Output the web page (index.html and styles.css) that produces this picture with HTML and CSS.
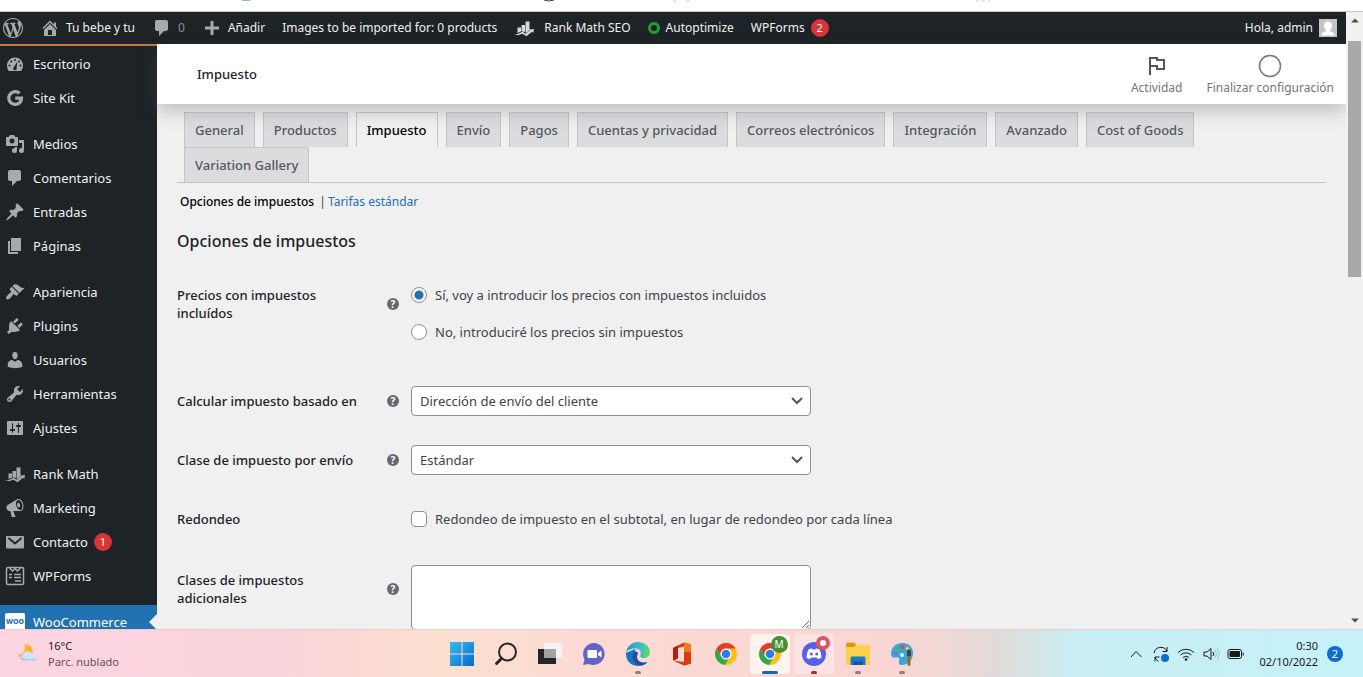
FILE: index.html
```html
<!DOCTYPE html>
<html lang="es">
<head>
    <meta charset="UTF-8">
    <meta name="viewport" content="width=device-width, initial-scale=1.0">
    <title>Impuesto - Tu bebe y tu</title>
    <link rel="stylesheet" href="styles.css">
</head>
<body>

    <!-- Shared icons -->
    <svg class="sprite" aria-hidden="true">
        <symbol id="i-comments" viewBox="0 0 20 20"><path d="M5 2h9c1.1 0 2 .9 2 2v7c0 1.1-.9 2-2 2h-2l-5 5v-5H5c-1.1 0-2-.9-2-2V4c0-1.1.9-2 2-2z"/></symbol>
        <symbol id="i-rank" viewBox="0 0 20 20"><path d="M3.500 9.500h3.500v4l-3.500 1.500zM7.500 7H11v6.500l-1 .500-2.500-.8zM11.500 3.500h4V12l-3 3-1-.8z"/><path d="M0 16.500l3-.3 5.500-2.500 3.500 2 3.700-3.400-1.200-.8 5.500-.5-.7 4-1.300-1.200-5.500 4.500-4-2.600-4.500 1.600z"/></symbol>
        <symbol id="i-chrome" viewBox="0 0 24 24"><circle cx="12" cy="12" r="11" fill="#fbc116"/><path d="M2.500 6.500l4.700 8.200L12 17.500l-1 5.450A11 11 0 0 1 2.500 6.500z" fill="#2da94f"/><path d="M11 23l5.500-9-4.500 3z" fill="#2da94f"/><path d="M2.500 6.500A11 11 0 0 1 21.500 6.500H12A5.500 5.500 0 0 0 7.200 14.700z" fill="#e33b2e"/><circle cx="12" cy="12" r="5.500" fill="#fff"/><circle cx="12" cy="12" r="4.300" fill="#2b7de9"/></symbol>
    </svg>

    <!-- Bottom edge of the browser toolbar -->
    <div class="toolbar-edge">
        <svg width="1000" height="5" aria-hidden="true"><path d="M242 0h8" stroke="#9db8c0" stroke-width="2"/><path d="M544 0q5 2 10 0" stroke="#3c4043" fill="none"/><path d="M673 0l3 2M689 0l-3 2M976 1h3M982 1h3M988 1h2" stroke="#c4c7ca" fill="none"/></svg>
    </div>

    <div class="viewport">
        <div class="site">

            <!-- Admin bar -->
            <header class="adminbar">
                <a href="#" aria-label="WordPress"><svg class="icon" viewBox="0 0 20 20"><path d="M20 10c0-5.510-4.490-10-10-10C4.480 0 0 4.490 0 10c0 5.520 4.480 10 10 10 5.510 0 10-4.480 10-10zM7.780 15.370L4.370 6.220c.55-.02 1.170-.08 1.170-.08.5-.06.44-1.130-.06-1.110 0 0-1.450.11-2.370.11-.18 0-.37 0-.58-.01C4.120 2.690 6.870 1.110 10 1.110c2.330 0 4.450.87 6.050 2.340-.68-.11-1.650.39-1.650 1.580 0 .74.45 1.360.9 2.100.35.61.55 1.360.55 2.460 0 1.490-1.400 5-1.400 5l-3.030-8.370c.54-.02.82-.17.82-.17.5-.05.44-1.250-.06-1.220 0 0-1.440.12-2.380.12-.87 0-2.330-.12-2.330-.12-.5-.03-.56 1.200-.06 1.220l.92.08 1.260 3.410zM17.410 10c.24-.64.74-1.870.43-4.250.7 1.290 1.050 2.710 1.050 4.250 0 3.290-1.730 6.240-4.400 7.780.97-2.590 1.940-5.200 2.920-7.780zM6.100 18.090C3.120 16.650 1.110 13.530 1.110 10c0-1.300.23-2.480.72-3.590C3.250 10.300 4.670 14.200 6.100 18.090zm4.030-6.630l2.580 6.980c-.86.29-1.760.45-2.710.45-.79 0-1.570-.11-2.290-.33.81-2.380 1.620-4.740 2.420-7.100z"/></svg></a>
                <a href="#"><svg class="icon" viewBox="0 0 20 20"><path fill-rule="evenodd" d="M16 8.500l1.530 1.530-1.060 1.060L10 4.600l-6.470 6.490-1.060-1.060L10 2.500l4 4v-2h2v4zm-6-2.460l6 5.990V18H4v-5.970zM12 17v-5H8v5h4z"/></svg>Tu bebe y tu</a>
                <a href="#" class="muted"><svg class="icon"><use href="#i-comments"/></svg>0</a>
                <a href="#"><svg class="icon" viewBox="0 0 20 20"><path d="M17 8.500v3h-5.500V17h-3v-5.500H3v-3h5.500V3h3v5.500z"/></svg>Añadir</a>
                <a href="#">Images to be imported for: 0 products</a>
                <a href="#" class="rank"><svg class="icon"><use href="#i-rank"/></svg>Rank Math SEO</a>
                <a href="#"><span class="ring"></span>Autoptimize</a>
                <a href="#">WPForms <span class="badge">2</span></a>
                <a href="#" class="account">Hola, admin
                    <svg class="avatar" viewBox="0 0 18 18"><path fill="#c4c4c4" d="M0 0h18v18H0z"/><path fill="#fff" d="M9 2.500a4 4 0 0 1 4 4.200c0 2-1 3.800-2 4.300v1.200c2 .6 4.500 1.200 4.500 4.300h-13c0-3.100 2.500-3.700 4.500-4.300V11c-1-.5-2-2.300-2-4.300a4 4 0 0 1 4-4.200z"/></svg>
                </a>
            </header>

            <div class="columns">

                <!-- Side menu -->
                <nav class="sidebar">
                    <ul>
                        <li><a href="#"><svg class="icon" viewBox="0 0 20 20"><path d="M3.760 17h12.480A7.950 7.950 0 0 0 18 11.500C18 7 14.400 3.500 10 3.500S2 7 2 11.500c0 2.100.66 4.140 1.760 5.500z"/><g fill="#1d2327"><circle cx="10" cy="6" r="1"/><circle cx="6.200" cy="7.600" r="1"/><circle cx="14" cy="7.600" r="1"/><circle cx="4.500" cy="11.500" r="1"/><circle cx="15.500" cy="11.500" r="1"/><path d="M12.400 7.500l-.8 6.200a1.800 1.800 0 1 1-2.500-.9z"/></g></svg>Escritorio</a></li>
                        <li><a href="#"><svg class="icon" viewBox="0 0 20 20"><path d="M10.200 8.500h7.800c.8 5.600-2.600 9.500-7.800 9.500A8 8 0 1 1 15.700 4.200l-2.400 2.300a4.700 4.700 0 1 0-3.100 8.200c2 0 3.600-1 4.200-2.900h-4.200z"/></svg>Site Kit</a></li>
                    </ul>
                    <ul>
                        <li><a href="#"><svg class="icon" viewBox="0 0 20 20"><path fill-rule="evenodd" d="M13 11V4c0-.55-.45-1-1-1h-1.670L9 1H5L3.670 3H2c-.55 0-1 .45-1 1v7c0 .55.45 1 1 1h10c.55 0 1-.45 1-1zM7 4.500a2.500 2.500 0 1 1 0 5 2.500 2.500 0 0 1 0-5zM14 6h5v10.500a2.500 2.500 0 1 1-2-2.450V9h-3V6zm-4 8.050V13h2v3.500a2.500 2.500 0 1 1-2-2.450z"/></svg>Medios</a></li>
                        <li><a href="#"><svg class="icon"><use href="#i-comments"/></svg>Comentarios</a></li>
                        <li><a href="#"><svg class="icon" viewBox="0 0 20 20"><path d="M10.440 3.020l1.820-1.820 6.360 6.350-1.830 1.820c-1.050-.68-2.480-.57-3.410.36l-.75.75c-.92.93-1.040 2.350-.35 3.410l-1.830 1.820-2.410-2.410-2.800 2.790c-.42.42-3.380 2.710-3.800 2.290s1.860-3.390 2.280-3.810l2.790-2.790L4.100 9.360l1.830-1.820c1.050.69 2.480.57 3.400-.36l.75-.75c.93-.92 1.050-2.350.36-3.410z"/></svg>Entradas</a></li>
                        <li><a href="#"><svg class="icon" viewBox="0 0 20 20"><path d="M6 15V2h10v13H6zm-1 1h8v2H3V5h2v11z"/></svg>Páginas</a></li>
                    </ul>
                    <ul>
                        <li><a href="#"><svg class="icon" viewBox="0 0 20 20"><path d="M14.480 11.060L7.410 3.990l1.500-1.500c.5-.56 2.300-.47 3.510.32 1.210.8 1.430 1.280 2.910 2.100 1.180.64 2.450 1.260 4.450.85zm-.71.71L6.700 4.700 4.930 6.470c-.39.39-.39 1.020 0 1.410l1.060 1.060c.39.39.39 1.030 0 1.420-.6.6-1.430 1.110-2.210 1.690-.35.26-.7.53-1.010.84C1.430 14.230.4 16.080 1.400 17.070c.99 1 2.840-.03 4.180-1.360.31-.31.58-.66.85-1.020.57-.78 1.080-1.610 1.690-2.210.39-.39 1.020-.39 1.410 0l1.060 1.060c.39.39 1.020.39 1.410 0z"/></svg>Apariencia</a></li>
                        <li><a href="#"><svg class="icon" viewBox="0 0 20 20"><path d="M13.110 4.360L9.870 7.600 8 5.730l3.240-3.240c.35-.34 1.050-.2 1.560.32.52.51.66 1.210.31 1.550zm-8 1.770l.91-1.120 9.010 9.010-1.190.84c-.71.71-2.630 1.160-3.820 1.160H6.140L4.900 17.260c-.59.59-1.540.59-2.120 0-.59-.58-.59-1.530 0-2.120l1.240-1.240v-3.880c0-1.130.4-3.190 1.090-3.890zm7.260 3.970l3.240-3.240c.34-.35 1.040-.21 1.550.31.52.51.66 1.210.31 1.550l-3.240 3.250z"/></svg>Plugins</a></li>
                        <li><a href="#"><svg class="icon" viewBox="0 0 20 20"><path d="M10 9.250c-2.270 0-2.730-3.440-2.730-3.440C7 4.020 7.820 2 9.970 2c2.160 0 2.980 2.020 2.710 3.810 0 0-.41 3.440-2.680 3.440zm0 2.570L12.720 10c2.390 0 4.520 2.330 4.520 4.530v2.490s-3.650 1.130-7.240 1.130c-3.650 0-7.240-1.130-7.240-1.130v-2.490c0-2.250 1.940-4.480 4.470-4.480z"/></svg>Usuarios</a></li>
                        <li><a href="#"><svg class="icon" viewBox="0 0 20 20"><path fill-rule="evenodd" d="M16.680 9.770c-1.340 1.340-3.300 1.670-4.950.99l-5.410 6.520c-.99.99-2.590.99-3.580 0s-.99-2.590 0-3.570l6.520-5.420c-.68-1.650-.35-3.610.99-4.950 1.280-1.280 3.120-1.620 4.720-1.060l-2.890 2.890 2.820 2.820 2.860-2.870c.53 1.580.18 3.390-1.080 4.650zM3.810 16.210c.4.39 1.040.39 1.430 0 .4-.4.4-1.040 0-1.430-.39-.4-1.030-.4-1.430 0-.39.39-.39 1.030 0 1.430z"/></svg>Herramientas</a></li>
                        <li><a href="#"><svg class="icon" viewBox="0 0 20 20"><path fill-rule="evenodd" d="M18 16V4c0-.55-.45-1-1-1H3c-.55 0-1 .45-1 1v12c0 .55.45 1 1 1h14c.55 0 1-.45 1-1zM8 11h1c.55 0 1 .45 1 1s-.45 1-1 1H8v1.500c0 .28-.22.5-.5.5s-.5-.22-.5-.5V13H6c-.55 0-1-.45-1-1s.45-1 1-1h1V5.500c0-.28.22-.5.5-.5s.5.22.5.5V11zm5-2h-1c-.55 0-1-.45-1-1s.45-1 1-1h1V5.500c0-.28.22-.5.5-.5s.5.22.5.5V7h1c.55 0 1 .45 1 1s-.45 1-1 1h-1v5.500c0 .28-.22.5-.5.5s-.5-.22-.5-.5V9z"/></svg>Ajustes</a></li>
                    </ul>
                    <ul>
                        <li><a href="#"><svg class="icon"><use href="#i-rank"/></svg>Rank Math</a></li>
                        <li><a href="#"><svg class="icon" viewBox="0 0 20 20"><path fill-rule="evenodd" d="M18.150 5.940c.46 1.620.38 3.220-.02 4.480-.42 1.280-1.260 2.180-2.300 2.480-.3.080-.6.100-1 .100h-6.600l2.220 5.500c.02.14-.06.26-.14.34-.08.1-.24.16-.34.16H6.950c-.1 0-.26-.06-.34-.16-.08-.08-.16-.2-.14-.34l-1-5.500H4.250c-.5.060-1.080-.2-1.560-.64-.46-.44-.88-1.080-1.060-1.880-.24-.8-.2-1.560-.02-2.200.18-.62.58-1.080 1.060-1.300l9.020-5.420c.3-.2.500-.35 1-.46 1.040-.3 2.240.1 3.220.98s1.820 2.240 2.240 3.860zm-2.600 5.980c.4-.1.740-.34 1.040-.7.580-.7.860-1.760.860-3.040 0-.64-.1-1.300-.28-1.980-.34-1.360-1.020-2.500-1.780-3.240s-1.680-1.100-2.460-.88c-.82.22-1.400.96-1.700 2-.32 1.040-.28 2.360.06 3.720.38 1.360 1 2.500 1.800 3.240.78.740 1.620 1.100 2.460.88zm-2.520-7.080c.22-.04.42-.02.62.04.38.16.76.48 1.020 1s.42 1.200.42 1.780c0 .3-.04.56-.12.8-.18.48-.44.84-.86.94-.34.1-.8-.06-1.140-.4s-.64-.86-.78-1.500c-.18-.62-.12-1.240.02-1.720s.48-.84.82-.94z"/></svg>Marketing</a></li>
                        <li><a href="#"><svg class="icon" viewBox="0 0 20 20"><rect x="1" y="4" width="18" height="12.500" rx="1"/><path d="M3.500 6l6.500 5.500L16.500 6" fill="none" stroke="#1d2327" stroke-width="1.800"/></svg>Contacto <span class="badge">1</span></a></li>
                        <li><a href="#"><svg class="icon outline" viewBox="0 0 20 20"><rect x="1.500" y="1.500" width="17" height="17" rx="1.500"/><path d="M4.500 2l3 3L10 2.500 12.500 5l3-3M4 8.500h3M9 8.500h7M4 11.500h3M9 11.500h7M10 15h6"/></svg>WPForms</a></li>
                    </ul>
                    <ul>
                        <li><a href="#" class="current"><span class="woo">Woo</span>WooCommerce</a></li>
                    </ul>
                </nav>

                <main class="content">
                    <div class="page-head">
                        <h1>Impuesto</h1>
                        <div class="activity">
                            <button type="button"><svg viewBox="0 0 24 24"><path d="M5 21V4h7v2h7v9h-7v-3H5" fill="none" stroke="#50575e" stroke-width="2"/></svg>Actividad</button>
                            <button type="button"><svg viewBox="0 0 24 24"><circle cx="12" cy="12" r="10.500" fill="none" stroke="#757575" stroke-width="1.500"/></svg>Finalizar configuración</button>
                        </div>
                    </div>

                    <div class="wrap">
                        <nav class="tabs">
                            <a href="#">General</a>
                            <a href="#">Productos</a>
                            <a href="#" class="active">Impuesto</a>
                            <a href="#">Envío</a>
                            <a href="#">Pagos</a>
                            <a href="#">Cuentas y privacidad</a>
                            <a href="#">Correos electrónicos</a>
                            <a href="#">Integración</a>
                            <a href="#">Avanzado</a>
                            <a href="#">Cost of Goods</a>
                            <a href="#">Variation Gallery</a>
                        </nav>

                        <div class="subnav">
                            <a href="#" class="active">Opciones de impuestos</a> <span>|</span><a href="#">Tarifas estándar</a>
                        </div>

                        <h2>Opciones de impuestos</h2>

                        <form>
                            <div class="row">
                                <span class="name" id="prices-label">Precios con impuestos incluídos</span>
                                <span class="help">?</span>
                                <div class="field radios" role="radiogroup" aria-labelledby="prices-label">
                                    <label><input type="radio" name="prices" checked>Sí, voy a introducir los precios con impuestos incluidos</label>
                                    <label><input type="radio" name="prices">No, introduciré los precios sin impuestos</label>
                                </div>
                            </div>
                            <div class="row">
                                <label class="name" for="based-on">Calcular impuesto basado en</label>
                                <span class="help">?</span>
                                <select id="based-on"><option>Dirección de envío del cliente</option></select>
                            </div>
                            <div class="row">
                                <label class="name" for="shipping-class">Clase de impuesto por envío</label>
                                <span class="help">?</span>
                                <select id="shipping-class"><option>Estándar</option></select>
                            </div>
                            <div class="row">
                                <span class="name">Redondeo</span>
                                <span></span>
                                <div class="field">
                                    <label><input type="checkbox">Redondeo de impuesto en el subtotal, en lugar de redondeo por cada línea</label>
                                </div>
                            </div>
                            <div class="row">
                                <label class="name" for="classes">Clases de impuestos adicionales</label>
                                <span class="help">?</span>
                                <textarea id="classes"></textarea>
                            </div>
                        </form>
                    </div>
                </main>
            </div>
        </div>

        <div class="scrollbar">
            <svg viewBox="0 0 8 4"><path d="M0 4l4-4 4 4z"/></svg>
            <div class="thumb"></div>
            <svg viewBox="0 0 8 4"><path d="M0 0l4 4 4-4z"/></svg>
        </div>
    </div>

    <!-- Windows taskbar -->
    <footer class="taskbar">
        <div class="weather">
            <svg viewBox="0 0 24 24"><path d="M9 2a8 8 0 1 1-7 11c4 1 9-3 7-11z" fill="#f7b52c"/><path d="M7 20a4 4 0 0 1 0-7 6 6 0 0 1 10.500-.5A4 4 0 0 1 19 20z" fill="#d3e3f5"/><path d="M5 19h15a4 4 0 0 0 2-2c-6 2-13 1-17-1z" fill="#a9c5ea"/></svg>
            <div>16°C<br><span>Parc. nublado</span></div>
        </div>

        <div class="apps">
            <button type="button" aria-label="Inicio"><svg viewBox="0 0 24 24"><defs><linearGradient id="win" x1="0" y1="0" x2="1" y2="1"><stop offset="0" stop-color="#38bdf2"/><stop offset="1" stop-color="#0669c9"/></linearGradient></defs><path fill="url(#win)" d="M0 0h11.500v11.500H0zM12.500 0H24v11.500H12.500zM0 12.500h11.500V24H0zM12.500 12.500H24V24H12.500z"/></svg></button>
            <button type="button" aria-label="Buscar"><svg viewBox="0 0 24 24" fill="none" stroke="#2b2727"><circle cx="13.500" cy="10" r="8.500" stroke-width="2"/><path d="M7.500 16.500l-5 5" stroke-width="3" stroke-linecap="round"/></svg></button>
            <button type="button" aria-label="Vista de tareas"><svg viewBox="0 0 24 24"><path fill="#262626" d="M0 7h18v15H0z"/><path fill="#f3f3f3" d="M6 1h18v15H6z"/><path fill="#a3a3a3" d="M6 7h12v9H6z"/></svg></button>
            <button type="button" aria-label="Chat"><svg viewBox="0 0 24 24"><path fill="#6264c8" d="M12 1a11 11 0 1 1-5 21l-6 1 1.500-5.500A11 11 0 0 1 12 1z"/><rect x="5.500" y="8" width="9.500" height="8" rx="1" fill="#fff"/><path d="M16 11l3.500-2.500v7L16 13z" fill="#fff"/></svg></button>
            <button type="button" aria-label="Edge" class="open"><svg viewBox="0 0 24 24"><defs><linearGradient id="edge" x1="0" x2="1"><stop offset="0" stop-color="#2a8fd8"/><stop offset=".6" stop-color="#35bfc9"/><stop offset="1" stop-color="#6bd957"/></linearGradient></defs><path fill="#1673c6" d="M0 11c0 8 5 13 12 13 4 0 7-1 9.500-4-6 2-11 0-11-5L9 7z"/><path fill="url(#edge)" d="M0 11C1 4 6 0 12 0c7 0 12 4.500 12 10 0 4-3 6-6 6s-5-1.500-3.500-3C16 9 13 6.500 9 6.500S1 8 0 11z"/><path fill="#1b4f9c" d="M9 10c-4 3-3 11 4 13 3 .5 6-.5 8.500-3-5 2-10-.5-10.500-4.500-.2-2 .8-3.500 1-4.500-.5-1-1.500-1.500-3-1z"/></svg></button>
            <button type="button" aria-label="Office"><svg viewBox="0 0 24 24"><path fill="#d83b11" d="M3 6l11-5.500 7 2v19l-7 2L3 18.500l11 1.500V4.500L8 6v10.500L3 18.500z"/><path fill="#f07a1f" d="M14 .5l7 2v8h-7z"/><path fill="#d83b11" d="M14 10h7v11.500l-7 2z"/><path fill="#b3200d" d="M3 6l5-2.500v13l-5 2z"/></svg></button>
            <button type="button" aria-label="Chrome"><svg viewBox="0 0 24 24"><use href="#i-chrome"/></svg></button>
            <button type="button" aria-label="Chrome, perfil M" class="focused"><svg viewBox="0 0 24 24"><use href="#i-chrome"/></svg><span class="profile">M</span></button>
            <button type="button" aria-label="Discord" class="alert"><svg viewBox="0 0 24 24"><circle cx="12" cy="12" r="12" fill="#5560ea"/><path fill="#fff" d="M6.500 7.500Q9 6 10 6.500l.5 1h3l.5-1q1-.5 3.500 1 2 3.500 2 8-2 1.500-3.700 1.500l-1-1.500h-5.600l-1 1.500Q6.500 17 4.500 15.500q0-4.500 2-8z"/><g fill="#5560ea"><circle cx="9.300" cy="12" r="1.500"/><circle cx="14.700" cy="12" r="1.500"/></g></svg><span class="dot"></span></button>
            <button type="button" aria-label="Explorador" class="open"><svg viewBox="0 0 24 24"><path fill="#d99a10" d="M0 2q0-1.500 1.500-1.500H8L10.500 3 8 6H0z"/><path fill="#fbd04a" d="M0 5h8l2-2h14v19q0 1-1 1H1q-1 0-1-1z"/><path fill="#1c76c5" d="M4.500 16q0-1.500 1.500-1.500h12q1.500 0 1.500 1.500v7h-15z"/><path fill="#0f559e" d="M7.500 19.500h9V23h-9z"/></svg></button>
            <button type="button" aria-label="Paint" class="open"><svg viewBox="0 0 24 24"><path fill="#35a6e0" d="M12 1c7 0 11 4 11 10 0 7-5 12-11 12-3 0-3.500-1.500-3-3.500s.5-4-2-4-6 .5-6-3.500C1 6 5 1 12 1z"/><circle cx="12.500" cy="5" r="2" fill="#e8463a"/><circle cx="7.500" cy="7" r="2" fill="#49b54c"/><circle cx="5.500" cy="11.500" r="1.700" fill="#a45cc9"/><circle cx="17.500" cy="6.500" r="1.800" fill="#f4c534"/><circle cx="12" cy="13" r="2" fill="#e6f4fb"/><path fill="#9a6432" d="M17.500 14h3v8q0 2-1.500 2t-1.500-2z"/><path fill="#4c4038" d="M17 8.500q2-2 4 0V14h-4z"/></svg></button>
        </div>

        <div class="tray">
            <svg viewBox="0 0 16 16"><path d="M3 11l5-5.500 5.500 5.500"/></svg>
            <svg viewBox="0 0 16 16"><path d="M1 7a7 7 0 0 1 13-2M14 1v4.500H9.500M5.500 15.500A7 7 0 0 1 2 11M2 15.500V11h4.500"/><circle cx="12" cy="12" r="4" fill="#0b6fcb" stroke="none"/></svg>
            <svg viewBox="0 0 16 16"><path d="M0 6.500a11.500 11.500 0 0 1 16 0M2.500 9a8 8 0 0 1 11 0M5 11.500a4.500 4.500 0 0 1 6 0"/><circle cx="8" cy="13.500" r="1.300" fill="#1b1b1b" stroke="none"/></svg>
            <svg viewBox="0 0 16 16"><path d="M1 6h3l4-3.500v11L4 10H1zM10 6q1.500 2 0 4"/><path d="M12 4q3 4 0 8M14 2.500q4 5.500 0 11" stroke="#9dbfc6"/></svg>
            <svg viewBox="0 0 16 16"><rect x="0" y="3.500" width="13.500" height="9" rx="2"/><path d="M2 5.500h9.500v5H2z" fill="#1b1b1b"/><path d="M15.200 6.500v3"/></svg>
            <div class="clock">0:30<br>02/10/2022</div>
            <span class="notices">2</span>
        </div>
    </footer>

</body>
</html>
```
FILE: styles.css
```css
* {
    box-sizing: border-box;
}

body {
    margin: 0;
    height: 100vh;
    display: flex;
    flex-direction: column;
    overflow: hidden;
    font-family: "Noto Sans", "Open Sans", sans-serif;
    font-size: 13px;
    line-height: 18px;
    color: #3c434a;
    background: #fff;
}

a {
    color: #2271b1;
    text-decoration: none;
}

button {
    font: inherit;
    border: 0;
    padding: 0;
    background: none;
    cursor: pointer;
}

ul {
    list-style: none;
    margin: 0;
    padding: 0;
}

.sprite {
    display: none;
}

.toolbar-edge {
    flex: 0 0 12px;
    overflow: hidden;
    line-height: 0;
    border-bottom: 1px solid #c8cbce;
}

.viewport {
    flex: 1;
    min-height: 0;
    display: flex;
}

.site {
    flex: 1;
    min-width: 0;
    display: flex;
    flex-direction: column;
    overflow: hidden;
    background: #f0f0f1;
}

.icon {
    width: 20px;
    height: 20px;
    flex: none;
    fill: #a7aaad;
}

.icon.outline {
    fill: none;
    stroke: #a7aaad;
    stroke-width: 1.5;
}

.badge {
    display: inline-block;
    width: 18px;
    height: 18px;
    border-radius: 50%;
    background: #d63638;
    color: #fff;
    font-size: 11px;
    line-height: 18px;
    text-align: center;
}

/* Admin bar */
.adminbar {
    flex: 0 0 32px;
    display: flex;
    align-items: center;
    gap: 17px;
    padding: 0 9px 0 3px;
    background: #1d2327;
    font-size: 12px;
    white-space: nowrap;
}

.adminbar a {
    display: flex;
    align-items: center;
    gap: 6px;
    color: #f0f0f1;
}

.adminbar .muted {
    color: #8c8f94;
}

.adminbar .rank {
    gap: 10px;
}

.adminbar .rank .icon {
    fill: #d5d7d9;
}

.ring {
    width: 12px;
    height: 12px;
    border: 3px solid #1fa12e;
    border-radius: 50%;
}

.adminbar .account {
    margin-left: auto;
}

.avatar {
    width: 18px;
    height: 18px;
}

.columns {
    flex: 1;
    min-height: 0;
    display: flex;
}

/* Side menu */
.sidebar {
    flex: 0 0 157px;
    padding-top: 1px;
    border-top: 2px solid #c3793f;
    background: #1d2327;
}

.sidebar ul {
    margin-bottom: 12px;
}

.sidebar a {
    position: relative;
    display: flex;
    align-items: center;
    gap: 8px;
    height: 34px;
    padding-left: 5px;
    line-height: 14px;
    color: #f0f0f1;
}

.sidebar .badge {
    margin-left: -2px;
}

.sidebar .current {
    background: #2271b1;
    color: #fff;
}

.sidebar .current::after {
    content: "";
    position: absolute;
    right: 0;
    border: 8px solid transparent;
    border-right-color: #f0f0f1;
}

.woo {
    width: 20px;
    border-radius: 2px;
    background: #fff;
    color: #2271b1;
    font-size: 7px;
    font-weight: 800;
    line-height: 18px;
    text-align: center;
    text-transform: uppercase;
}

/* Page header */
.content {
    flex: 1;
    min-width: 0;
}

.page-head {
    position: relative;
    z-index: 1;
    display: flex;
    align-items: center;
    justify-content: space-between;
    height: 60px;
    padding: 0 12px 0 40px;
    background: #fff;
    box-shadow: 0 8px 16px rgba(85, 93, 102, 0.3);
}

.page-head h1 {
    margin: 0;
    font-size: 13px;
    font-weight: 500;
    color: #1d2327;
}

.activity {
    display: flex;
    gap: 24px;
    padding-top: 2px;
}

.activity button {
    display: flex;
    flex-direction: column;
    align-items: center;
    gap: 1px;
    font-size: 12px;
    color: #757575;
}

.activity svg {
    width: 24px;
    height: 24px;
}

/* Settings */
.wrap {
    padding: 8px 20px 0;
}

.tabs {
    display: flex;
    flex-wrap: wrap;
    gap: 0 8px;
    padding-left: 7px;
    border-bottom: 1px solid #c3c4c7;
}

.tabs a {
    height: 35px;
    padding: 0 10px;
    border: 1px solid #c3c4c7;
    border-bottom: 0;
    background: #dcdcde;
    color: #50575e;
    font-weight: 500;
    line-height: 35px;
}

.tabs .active {
    background: #f0f0f1;
    color: #000;
}

.subnav {
    padding: 10px 3px;
    font-size: 12px;
}

.subnav .active {
    color: #000;
    font-weight: 500;
}

.subnav span {
    margin: 0 2px;
}

h2 {
    margin: 10px 0 29px;
    font-size: 16px;
    font-weight: 500;
    line-height: 20px;
    color: #1d2327;
}

.row {
    display: grid;
    grid-template-columns: 204px 30px 1fr;
    justify-items: start;
    align-items: start;
    margin-bottom: 29px;
}

.name {
    width: 190px;
    padding: 6px 0;
    font-weight: 500;
    color: #1d2327;
}

.help {
    width: 12px;
    height: 12px;
    margin: 0 6px;
    align-self: center;
    border-radius: 50%;
    background: #646970;
    color: #fff;
    font-size: 10px;
    font-weight: 700;
    line-height: 12px;
    text-align: center;
}

.row:first-child .help,
.row:last-child .help {
    align-self: start;
    margin-top: 18px;
}

.field {
    padding: 6px 0 8px;
}

.field label {
    display: flex;
    align-items: center;
    gap: 8px;
}

.radios {
    display: grid;
    gap: 19px;
    padding-bottom: 16px;
}

input {
    appearance: none;
    width: 16px;
    height: 16px;
    margin: 0;
    border: 1px solid #8c8f94;
    border-radius: 4px;
    background: #fff;
}

input[type="radio"] {
    border-radius: 50%;
}

input[type="radio"]:checked {
    background: radial-gradient(circle, #2271b1 4px, #fff 5px);
}

select,
textarea {
    width: 400px;
    max-width: 100%;
    border: 1px solid #8c8f94;
    border-radius: 4px;
    background-color: #fff;
    color: #3c434a;
    font: inherit;
}

select {
    appearance: none;
    height: 30px;
    padding: 0 24px 0 8px;
    background-image: url("data:image/svg+xml,%3Csvg xmlns='http://www.w3.org/2000/svg' width='12' height='8'%3E%3Cpath d='M1 1l5 5 5-5' fill='none' stroke='%23555' stroke-width='2'/%3E%3C/svg%3E");
    background-repeat: no-repeat;
    background-position: right 7px center;
}

textarea {
    height: 65px;
}

/* Scrollbar */
.scrollbar {
    flex: 0 0 17px;
    display: flex;
    flex-direction: column;
    align-items: center;
    justify-content: space-between;
    padding: 6px 2px;
    background: #f1f1f1;
}

.scrollbar svg {
    width: 8px;
    height: 5px;
    fill: #505050;
}

.thumb {
    width: 13px;
    height: 39%;
    margin: 18px 0 auto;
    background: #a8a8a8;
}

/* Taskbar */
.taskbar {
    flex: 0 0 48px;
    display: grid;
    grid-template-columns: 1fr auto 1fr;
    align-items: center;
    border-top: 1px solid #e3cfd0;
    background: linear-gradient(90deg, #fdd5e2 0%, #f9d3da 20%, #fbdfcf 32%, #fbdad4 44%, #fad6d2 66%, #e2dad9 73%, #c8eef4 79%, #c5f1f8 100%);
    font-size: 11px;
    line-height: 16px;
    color: #1b1b1b;
}

.weather {
    display: flex;
    align-items: center;
    gap: 9px;
    padding-left: 16px;
}

.weather svg {
    width: 23px;
    height: 23px;
}

.weather span {
    color: #5e5258;
}

.apps {
    display: flex;
    gap: 4px;
}

.apps button {
    position: relative;
    display: grid;
    place-items: center;
    width: 40px;
    height: 40px;
    border-radius: 4px;
}

.apps button > svg {
    width: 24px;
    height: 24px;
}

.apps .focused {
    background: #fef3ef;
}

.apps .alert {
    background: #fde4e4;
}

.apps .open::after,
.apps .focused::after,
.apps .alert::after {
    content: "";
    position: absolute;
    bottom: 0;
    width: 6px;
    height: 3px;
    border-radius: 2px;
    background: #8d8080;
}

.apps .focused::after {
    width: 16px;
    background: #1668b0;
}

.apps .alert::after {
    background: #b32a22;
}

.profile,
.dot {
    position: absolute;
    top: 2px;
    right: 2px;
    width: 17px;
    height: 17px;
    border-radius: 50%;
    background: #4a8f2f;
    color: #fff;
    font-size: 10px;
}

.dot {
    width: 14px;
    height: 14px;
    right: 4px;
    border: 4px solid #e0545c;
    background: #fff;
}

.tray {
    display: flex;
    align-items: center;
    justify-content: flex-end;
    gap: 9px;
    padding-right: 20px;
}

.tray svg {
    width: 16px;
    height: 16px;
    fill: none;
    stroke: #1b1b1b;
    overflow: visible;
}

.clock {
    margin-left: 6px;
    text-align: right;
}

.notices {
    width: 16px;
    height: 16px;
    border-radius: 50%;
    background: #0b6fcb;
    color: #fff;
    text-align: center;
}
```
